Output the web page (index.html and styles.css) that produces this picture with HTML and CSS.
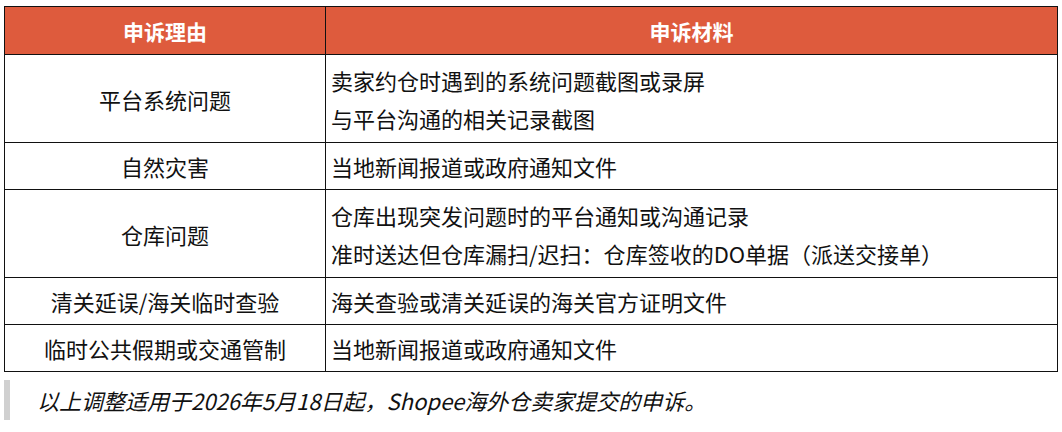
FILE: index.html
```html
<!DOCTYPE html>
<html lang="zh-CN">
<head>
<meta charset="utf-8">
<title>申诉材料</title>
<link rel="stylesheet" href="styles.css">
</head>
<body>
<table class="appeal">
  <colgroup><col class="c-reason"><col class="c-material"></colgroup>
  <thead>
    <tr class="r-head"><th>申诉理由</th><th>申诉材料</th></tr>
  </thead>
  <tbody>
    <tr class="r-double"><td class="reason">平台系统问题</td><td class="material"><div class="line">卖家约仓时遇到的系统问题截图或录屏</div><div class="line">与平台沟通的相关记录截图</div></td></tr>
    <tr class="r-single"><td class="reason">自然灾害</td><td class="material">当地新闻报道或政府通知文件</td></tr>
    <tr class="r-double"><td class="reason">仓库问题</td><td class="material"><div class="line">仓库出现突发问题时的平台通知或沟通记录</div><div class="line">准时送达但仓库漏扫/迟扫：仓库签收的DO单据（派送交接单）</div></td></tr>
    <tr class="r-single"><td class="reason">清关延误/海关临时查验</td><td class="material">海关查验或清关延误的海关官方证明文件</td></tr>
    <tr class="r-single"><td class="reason">临时公共假期或交通管制</td><td class="material">当地新闻报道或政府通知文件</td></tr>
  </tbody>
</table>
<div class="note">以上调整适用于2026年5月18日起，Shopee海外仓卖家提交的申诉。</div>
</body>
</html>
```

FILE: styles.css
```css
html, body {
  margin: 0;
  padding: 0;
  background: #ffffff;
}
body {
  padding: 6px 4px 0 4px;
  font-family: "Noto Sans CJK SC", "Noto Sans", sans-serif;
  color: #111111;
}
.appeal {
  width: 1054px;
  border-collapse: collapse;
  table-layout: fixed;
  font-size: 22px;
}
.c-reason { width: 321px; }
.appeal th, .appeal td {
  border: 1px solid #111111;
  padding: 0 5px;
  vertical-align: middle;
}
.appeal th {
  background: #de5b3d;
  color: #ffffff;
  font-weight: 700;
  font-size: 21px;
  text-align: center;
  line-height: 38px;
}
.r-head { height: 48px; }
.r-double { height: 88px; }
.r-single { height: 47px; }
.reason {
  text-align: center;
  line-height: 38px;
}
.material {
  text-align: left;
  line-height: 38px;
}
.note {
  margin-top: 8px;
  border-left: 6px solid #d0d0d0;
  height: 40px;
  padding-left: 27px;
  font-size: 22px;
  font-style: italic;
  line-height: 40px;
  color: #111111;
}
```
